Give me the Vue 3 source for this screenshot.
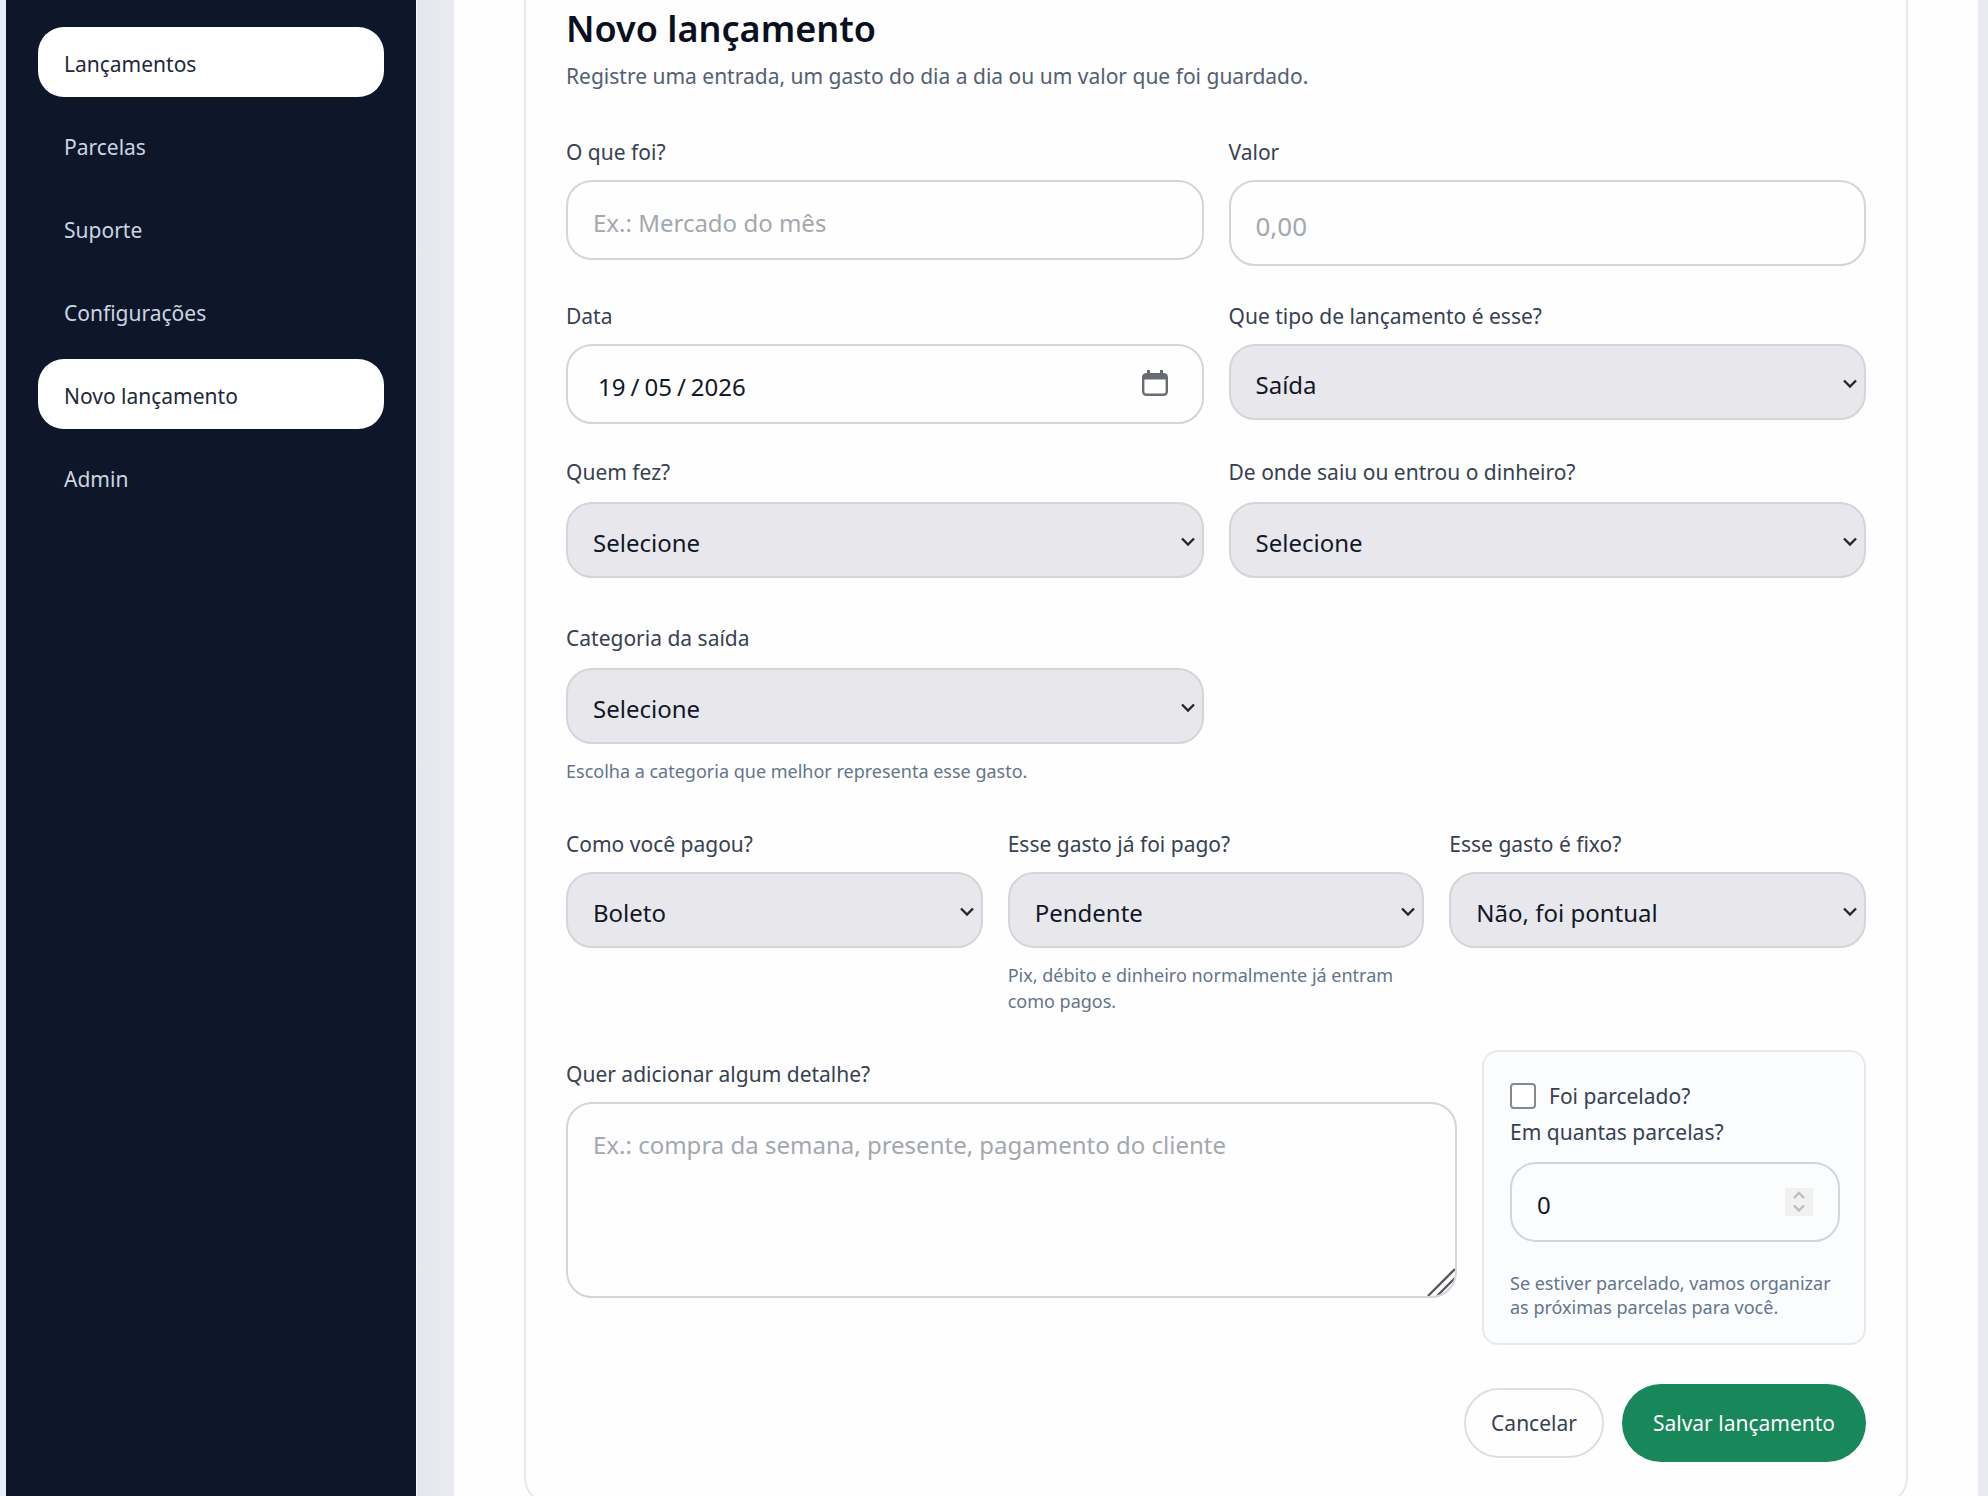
<script setup>
import { reactive } from 'vue'

const navItems = [
  { label: 'Lançamentos', active: true },
  { label: 'Parcelas', active: false },
  { label: 'Suporte', active: false },
  { label: 'Configurações', active: false },
  { label: 'Novo lançamento', active: true },
  { label: 'Admin', active: false },
]

const form = reactive({
  descricao: '',
  valor: '',
  data: '2026-05-19',
  tipo: 'Saída',
  pessoa: 'Selecione',
  conta: 'Selecione',
  categoria: 'Selecione',
  pagamento: 'Boleto',
  status: 'Pendente',
  fixo: 'Não, foi pontual',
  detalhe: '',
  parcelado: false,
  parcelas: 0,
})
</script>

<template>
  <div class="shell">
    <aside class="sidebar">
      <nav class="nav">
        <a
          v-for="item in navItems"
          :key="item.label"
          href="#"
          class="nav-link"
          :class="{ active: item.active }"
        >{{ item.label }}</a>
      </nav>
    </aside>

    <main class="content">
      <form class="card" @submit.prevent>
        <h1 class="title">Novo lançamento</h1>
        <p class="subtitle">Registre uma entrada, um gasto do dia a dia ou um valor que foi guardado.</p>

        <div class="row two first">
          <div class="field">
            <label for="descricao">O que foi?</label>
            <input id="descricao" v-model="form.descricao" class="control" type="text" placeholder="Ex.: Mercado do mês">
          </div>
          <div class="field">
            <label for="valor">Valor</label>
            <input id="valor" v-model="form.valor" class="control amount" type="text" inputmode="decimal" placeholder="0,00">
          </div>
        </div>

        <div class="row two second">
          <div class="field">
            <label for="data">Data</label>
            <input id="data" v-model="form.data" class="control date" type="date">
          </div>
          <div class="field">
            <label for="tipo">Que tipo de lançamento é esse?</label>
            <select id="tipo" v-model="form.tipo" class="control">
              <option>Saída</option>
              <option>Entrada</option>
            </select>
          </div>
        </div>

        <div class="row two third spaced">
          <div class="field">
            <label for="pessoa">Quem fez?</label>
            <select id="pessoa" v-model="form.pessoa" class="control">
              <option>Selecione</option>
            </select>
          </div>
          <div class="field">
            <label for="conta">De onde saiu ou entrou o dinheiro?</label>
            <select id="conta" v-model="form.conta" class="control">
              <option>Selecione</option>
            </select>
          </div>
        </div>

        <div class="row two section spaced">
          <div class="field">
            <label for="categoria">Categoria da saída</label>
            <select id="categoria" v-model="form.categoria" class="control">
              <option>Selecione</option>
            </select>
            <p class="hint">Escolha a categoria que melhor representa esse gasto.</p>
          </div>
        </div>

        <div class="row three section">
          <div class="field">
            <label for="pagamento">Como você pagou?</label>
            <select id="pagamento" v-model="form.pagamento" class="control">
              <option>Boleto</option>
            </select>
          </div>
          <div class="field">
            <label for="status">Esse gasto já foi pago?</label>
            <select id="status" v-model="form.status" class="control">
              <option>Pendente</option>
            </select>
            <p class="hint">Pix, débito e dinheiro normalmente já entram como pagos.</p>
          </div>
          <div class="field">
            <label for="fixo">Esse gasto é fixo?</label>
            <select id="fixo" v-model="form.fixo" class="control">
              <option>Não, foi pontual</option>
            </select>
          </div>
        </div>

        <div class="row details">
          <div class="field note">
            <label for="detalhe">Quer adicionar algum detalhe?</label>
            <textarea
              id="detalhe"
              v-model="form.detalhe"
              class="control area"
              placeholder="Ex.: compra da semana, presente, pagamento do cliente"
            ></textarea>
          </div>
          <div class="installments">
            <label class="check">
              <input v-model="form.parcelado" type="checkbox">
              <span>Foi parcelado?</span>
            </label>
            <div class="field">
              <label for="parcelas">Em quantas parcelas?</label>
              <input id="parcelas" v-model="form.parcelas" class="control number" type="number" min="0">
            </div>
            <p class="hint">Se estiver parcelado, vamos organizar as próximas parcelas para você.</p>
          </div>
        </div>

        <div class="actions">
          <button type="button" class="cancel">Cancelar</button>
          <button type="submit" class="save">Salvar lançamento</button>
        </div>
      </form>
    </main>
  </div>
</template>

<style>
body {
  margin: 0;
  background: #e8ebf0;
}
</style>

<style scoped>
.shell {
  box-sizing: border-box;
  display: flex;
  height: 100vh;
  overflow: hidden;
  border-left: 6px solid #e9eff9;
  background: linear-gradient(90deg, #e4e8ee 410px, #e8ebef 448px);
  color: #374151;
  font-family: "Noto Sans", "Open Sans", sans-serif;
  font-size: 21px;
  line-height: 30px;
}

.shell * {
  box-sizing: border-box;
}

.sidebar {
  flex: 0 0 411px;
  padding: 27px 32px 0;
  border-right: 1px solid #f8fafc;
  background: #0e172a;
}

.nav {
  display: flex;
  flex-direction: column;
  gap: 13px;
}

.nav-link {
  display: flex;
  align-items: center;
  height: 70px;
  padding: 4px 26px 0;
  border-radius: 26px;
  color: #cbd5e1;
  text-decoration: none;
}

.nav-link.active {
  background: #fff;
  color: #1e293b;
}

.content {
  flex: 1;
  min-width: 0;
  margin: 0 10px 0 37px;
  padding: 0 70px;
  background: #fefefe;
}

.card {
  padding: 5px 40px 40px;
  border: 2px solid #e6e9ec;
  border-top: 0;
  border-radius: 0 0 26px 26px;
}

.title {
  margin: 0 0 8px;
  color: #0a1020;
  font-size: 36px;
  font-weight: 600;
  line-height: 48px;
}

.subtitle {
  margin: 0;
  color: #526071;
}

.row {
  display: grid;
  align-items: start;
  gap: 25px;
}

.two {
  grid-template-columns: repeat(2, minmax(0, 1fr));
}

.three {
  grid-template-columns: repeat(3, minmax(0, 1fr));
}

.first {
  margin-top: 46px;
}

.second {
  margin-top: 35px;
}

.third {
  margin-top: 33px;
}

.section {
  margin-top: 45px;
}

.field {
  display: flex;
  flex-direction: column;
  gap: 13px;
}

.spaced .field,
.installments .field {
  gap: 15px;
}

.control {
  width: 100%;
  height: 80px;
  margin: 0;
  padding: 5px 25px 0;
  border: 2px solid #d2d6da;
  border-radius: 26px;
  outline: 0;
  background-color: transparent;
  color: #111827;
  font: 24px/34px "Noto Sans", "Open Sans", sans-serif;
}

.control:focus-visible {
  border-color: #18875a;
}

.control::placeholder {
  color: #a3a8af;
  opacity: 1;
}

.amount {
  height: 86px;
  font-size: 26px;
}

select.control {
  height: 76px;
  appearance: none;
  background: #e8e8ec url("data:image/svg+xml,%3Csvg xmlns='http://www.w3.org/2000/svg' width='16' height='12' fill='none' stroke='%2324272b' stroke-width='2.4'%3E%3Cpath d='M2 2.5l6 6 6-6'/%3E%3C/svg%3E") no-repeat right 6px top 32px;
}

.date {
  padding-right: 33px;
}

.date::-webkit-datetime-edit {
  padding: 0 5px;
}

.date::-webkit-datetime-edit-fields-wrapper {
  display: inline-grid;
  grid-template-columns: repeat(5, auto);
}

.date::-webkit-datetime-edit-text {
  grid-row: 1;
  padding: 0 5px;
}

.date::-webkit-datetime-edit-day-field {
  grid-area: 1 / 1;
  padding: 0;
}

.date::-webkit-datetime-edit-month-field {
  grid-area: 1 / 3;
  padding: 0;
}

.date::-webkit-datetime-edit-year-field {
  grid-area: 1 / 5;
  padding: 0;
}

.date::-webkit-calendar-picker-indicator {
  width: 28px;
  height: 28px;
  margin: 0 0 8px;
  padding: 0;
  background: url("data:image/svg+xml,%3Csvg xmlns='http://www.w3.org/2000/svg' width='28' height='28' fill='none'%3E%3Crect x='2.2' y='5.2' width='23.6' height='20.6' rx='3' stroke='%23686c72' stroke-width='2.4'/%3E%3Cpath d='M2 5h24v5.5H2zM6 1h3v4H6zM19 1h3v4h-3z' fill='%23686c72'/%3E%3C/svg%3E") no-repeat center;
}

.hint {
  margin: 1px 0 0;
  color: #64748b;
  font-size: 18px;
  line-height: 26px;
}

.spaced .hint {
  margin-top: -1px;
}

.details {
  grid-template-columns: minmax(0, 1fr) 384px;
  margin-top: 36px;
}

.note {
  padding-top: 9px;
}

.area {
  display: block;
  height: 196px;
  padding-top: 24px;
  resize: none;
  background: url("data:image/svg+xml,%3Csvg xmlns='http://www.w3.org/2000/svg' width='32' height='32' fill='none' stroke='%2355585c' stroke-width='2.4'%3E%3Cpath d='M3 30L30 3M12 30l18-18M21 30l9-9M28 30l2-2'/%3E%3C/svg%3E") no-repeat right bottom;
  background-origin: border-box;
  background-clip: border-box;
}

.installments {
  padding: 26px 24px 24px 26px;
  border: 2px solid #e6eaee;
  border-radius: 16px;
  background: #fafcfe;
}

.check {
  display: flex;
  align-items: center;
  gap: 13px;
  height: 36px;
  margin-bottom: 3px;
}

.check input {
  width: 26px;
  height: 26px;
  margin: 0;
  border: 2px solid #85888c;
  border-radius: 4px;
  appearance: none;
  background: #fff;
}

.check input:checked {
  background: #18875a;
}

.number::-webkit-inner-spin-button {
  width: 28px;
  height: 28px;
  margin: 0 0 6px;
  appearance: none;
  opacity: 1;
  background: #f1f1f2 url("data:image/svg+xml,%3Csvg xmlns='http://www.w3.org/2000/svg' width='28' height='28' fill='none' stroke='%23bbbdc0' stroke-width='2.4'%3E%3Cpath d='M9 10l5-5 5 5M9 17.5l5 5 5-5'/%3E%3C/svg%3E") no-repeat center;
}

.installments .hint {
  margin-top: 29px;
  line-height: 24px;
}

.actions {
  display: flex;
  align-items: center;
  justify-content: flex-end;
  gap: 18px;
  margin-top: 39px;
}

.actions button {
  border-radius: 40px;
  font: inherit;
  cursor: pointer;
}

.cancel {
  height: 70px;
  padding: 0 25px;
  border: 2px solid #dcdfe2;
  background: #fefefe;
  color: #374151;
}

.save {
  height: 78px;
  padding: 0 31px;
  border: 0;
  background: #18875a;
  color: #fff;
}
</style>
